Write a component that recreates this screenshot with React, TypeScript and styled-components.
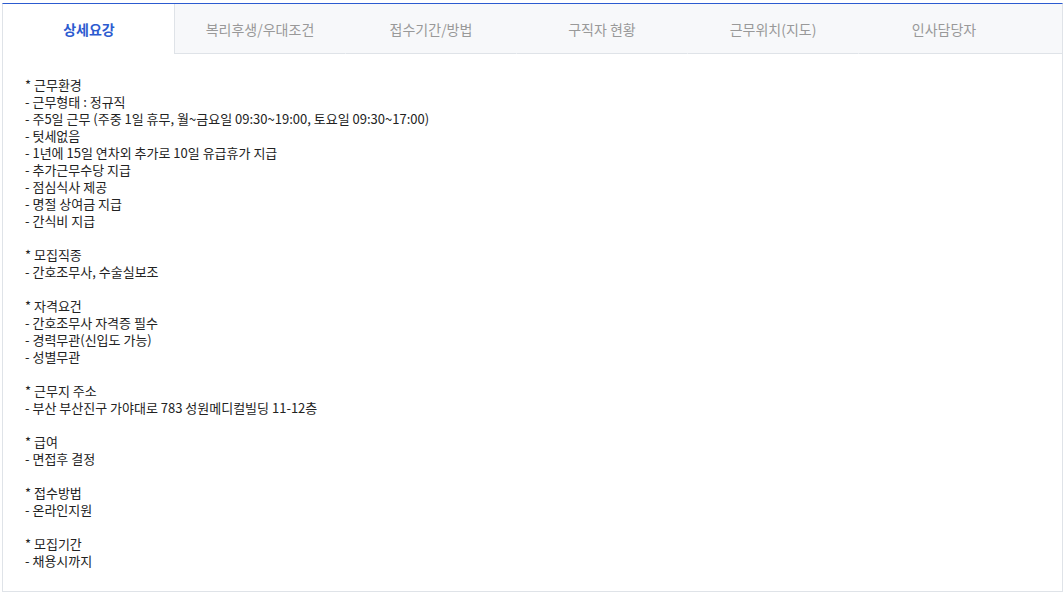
import React from "react";
import styled, { createGlobalStyle } from "styled-components";

const GlobalStyle = createGlobalStyle`
  body {
    margin: 0;
    background: #fff;
    font-family: "Malgun Gothic", "Noto Sans CJK KR", "Noto Sans", sans-serif;
  }
`;

const Wrapper = styled.section`
  box-sizing: border-box;
  margin: 3px 0 0 2px;
  width: 1061px;
  height: 589px;
  border: 1px solid #dfe3e8;
  border-top: 1px solid #2c5bd0;
  display: flex;
  flex-direction: column;
`;

const TabList = styled.ul`
  display: flex;
  margin: 0;
  padding: 0;
  list-style: none;
  background: #f7f8fa;
  border-bottom: 1px solid #dfe3e8;
`;

const Tab = styled.li<{ $active?: boolean; $first?: boolean }>`
  box-sizing: border-box;
  width: 171px;
  height: 50px;
  margin-bottom: -1px;
  display: flex;
  align-items: center;
  justify-content: center;
  font-size: 14px;
  background: ${(p) => (p.$active ? "#fff" : "#f7f8fa")};
  color: ${(p) => (p.$active ? "#2c5bd0" : "#999")};
  font-weight: ${(p) => (p.$active ? 700 : 400)};
  border-bottom: 1px solid ${(p) => (p.$active ? "#fff" : "#dfe3e8")};
  border-left: 1px solid ${(p) => (p.$first ? "#dfe3e8" : "transparent")};
  cursor: pointer;
`;

const Content = styled.div`
  padding: 22px 22px 20px 22px;
  font-size: 13px;
  line-height: 17px;
  color: #222;
  white-space: pre-line;
`;

const tabs = [
  "상세요강",
  "복리후생/우대조건",
  "접수기간/방법",
  "구직자 현황",
  "근무위치(지도)",
  "인사담당자",
];

const detail = `* 근무환경
- 근무형태 : 정규직
- 주5일 근무 (주중 1일 휴무, 월~금요일 09:30~19:00, 토요일 09:30~17:00)
- 텃세없음
- 1년에 15일 연차외 추가로 10일 유급휴가 지급
- 추가근무수당 지급
- 점심식사 제공
- 명절 상여금 지급
- 간식비 지급

* 모집직종
- 간호조무사, 수술실보조

* 자격요건
- 간호조무사 자격증 필수
- 경력무관(신입도 가능)
- 성별무관

* 근무지 주소
- 부산 부산진구 가야대로 783 성원메디컬빌딩 11-12층

* 급여
- 면접후 결정

* 접수방법
- 온라인지원

* 모집기간
- 채용시까지`;

const App = () => {
  return (
    <>
      <GlobalStyle />
      <Wrapper>
        <TabList>
          {tabs.map((t, i) => (
            <Tab key={t} $active={i === 0} $first={i === 1}>
              {t}
            </Tab>
          ))}
        </TabList>
        <Content>{detail}</Content>
      </Wrapper>
    </>
  );
};

export default App;
